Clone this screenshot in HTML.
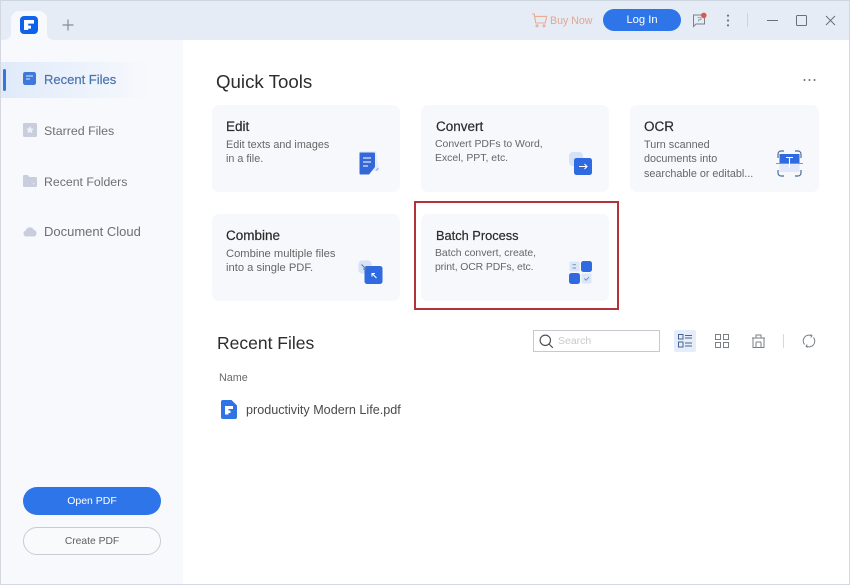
<!DOCTYPE html>
<html lang="en">
<head>
<meta charset="utf-8">
<title>Quick Tools</title>
<style>
html,body{margin:0;padding:0;width:850px;height:585px;overflow:hidden;background:#fff;font-family:"Liberation Sans",sans-serif;}
.a{position:absolute;white-space:nowrap;}
#app{position:relative;width:850px;height:585px;overflow:hidden;background:#fff;}
.card{position:absolute;background:#f6f8fc;border-radius:7px;width:188px;height:87px;}
.t{position:absolute;left:14px;top:13px;font-size:13.5px;line-height:17px;color:#2b2b2b;white-space:nowrap;-webkit-text-stroke:.2px #2b2b2b;}
.d{position:absolute;left:14px;top:32.5px;font-size:10.8px;line-height:14.5px;color:#666;white-space:nowrap;}
.nav{font-size:13px;color:#6f6f6f;line-height:18px;}
svg{position:absolute;display:block;}
</style>
</head>
<body>
<div id="app">
  <!-- sidebar -->
  <div class="a" style="left:0;top:40px;width:183px;height:545px;background:#f7f9fd;"></div>
  <div class="a" style="left:0;top:62px;width:150px;height:36px;background:linear-gradient(90deg,#dfeafa 0%,#eaf1fb 45%,#f7f9fd 100%);"></div>
  <div class="a" style="left:3px;top:69px;width:3px;height:22px;background:#3b74d9;border-radius:2px;"></div>

  <!-- title bar -->
  <div class="a" style="left:0;top:0;width:850px;height:40px;background:#e6ecf5;"></div>
  <div class="a" style="left:0;top:0;width:850px;height:1px;background:#cdd5e0;"></div>
  <svg style="left:3px;top:11px" width="52" height="29" viewBox="0 0 52 29">
    <path d="M0 29c5 0 8-2 8-7V8a8 8 0 0 1 8-8h20a8 8 0 0 1 8 8v14c0 5 3 7 8 7z" fill="#f7f9fd"/>
  </svg>

  <svg style="left:20px;top:16px" width="18" height="18" viewBox="0 0 18 18">
    <rect width="18" height="18" rx="4" fill="#0f62ea"/>
    <path d="M4 4h10v3.6H8.2v2H11v3H8.2V14H4z" fill="#fff"/>
  </svg>
  <svg style="left:62px;top:19px" width="12" height="12" viewBox="0 0 12 12">
    <path d="M6 .5v11M.5 6h11" stroke="#858b94" stroke-width="1.2" fill="none"/>
  </svg>

  <svg style="left:531px;top:13px" width="17" height="15" viewBox="0 0 17 15" fill="none" stroke="#e8ab94" stroke-width="1.1">
    <path d="M1 1h2.200l1.600 9h9.400l1.500-6.600H3.800"/><circle cx="6" cy="12.800" r="1"/><circle cx="13" cy="12.800" r="1"/>
  </svg>
  <div class="a" style="left:550px;top:13.500px;font-size:10.600px;line-height:15px;color:#e3a690;">Buy Now</div>
  <div class="a" style="left:603px;top:9px;width:78px;height:22px;border-radius:11px;background:#2d75e8;color:#fff;font-size:11.200px;line-height:23px;text-align:center;">Log In</div>

  <svg style="left:692px;top:12px" width="16" height="16" viewBox="0 0 16 16" fill="none">
    <path d="M1.500 3h11v9H4l-2.500 2.500z" stroke="#7a818b" stroke-width="1"/>
    <path d="M5.600 5.600h2.400a1 1 0 0 1 0 2.200H6.600v1.600" stroke="#8a9099" stroke-width=".8"/>
    <circle cx="11.800" cy="3.400" r="2.800" fill="#dd5a46"/>
  </svg>
  <svg style="left:726px;top:14px" width="4" height="13" viewBox="0 0 4 13" fill="#6d747e">
    <circle cx="2" cy="1.600" r="1.100"/><circle cx="2" cy="6.500" r="1.100"/><circle cx="2" cy="11.400" r="1.100"/>
  </svg>
  <div class="a" style="left:747px;top:13px;width:1px;height:14px;background:#cfd5dd;"></div>
  <div class="a" style="left:767px;top:20px;width:11px;height:1px;background:#6a7079;"></div>
  <div class="a" style="left:796px;top:15px;width:9px;height:9px;border:1px solid #6a7079;border-radius:1.500px;"></div>
  <svg style="left:825px;top:15px" width="11" height="11" viewBox="0 0 11 11">
    <path d="M1 1l9 9M10 1l-9 9" stroke="#6a7079" stroke-width="1" fill="none"/>
  </svg>

  <!-- nav -->
  <svg style="left:23px;top:72px" width="13" height="13" viewBox="0 0 13 13">
    <rect width="13" height="13" rx="2.200" fill="#3f78dc"/>
    <path d="M3 4h7M3 7h4" stroke="#dce8fa" stroke-width="1"/>
  </svg>
  <div class="a nav" style="left:44px;top:71px;color:#4a74ae;-webkit-text-stroke:.2px #4a74ae;">Recent Files</div>

  <svg style="left:23px;top:123px" width="14" height="14" viewBox="0 0 14 14">
    <rect width="14" height="14" rx="1.500" fill="#c9cedc"/>
    <path d="M7 3l1.200 2.500 2.600.3-1.900 1.800.5 2.600L7 9l-2.400 1.200.5-2.600L3.200 5.800l2.600-.3z" fill="#eef0f6"/>
  </svg>
  <div class="a nav" style="left:44px;top:122px;font-size:12.400px;">Starred Files</div>

  <svg style="left:23px;top:175px" width="14" height="12" viewBox="0 0 14 12">
    <path d="M0 1.300A1.200 1.200 0 0 1 1.200 0h3.600l1.500 2h6.500A1.200 1.200 0 0 1 14 3.200v7.600a1.200 1.200 0 0 1-1.200 1.200H1.200A1.200 1.200 0 0 1 0 10.800z" fill="#c9cedc"/>
    <path d="M9.800 8.800h1.600" stroke="#eef0f6" stroke-width=".9"/>
  </svg>
  <div class="a nav" style="left:44px;top:173px;font-size:12.300px;">Recent Folders</div>

  <svg style="left:23px;top:226px" width="14" height="11" viewBox="0 0 14 11">
    <path d="M3.200 10.500A3 3 0 0 1 2.800 4.600 4.300 4.300 0 0 1 10.900 4a3.300 3.300 0 0 1-.2 6.500z" fill="#c9cedc"/>
  </svg>
  <div class="a nav" style="left:44px;top:223px;">Document Cloud</div>

  <div class="a" style="left:23px;top:487px;width:138px;height:28px;border-radius:14px;background:#2d75e8;color:#fff;font-size:10.500px;line-height:29px;text-align:center;">Open PDF</div>
  <div class="a" style="left:23px;top:527px;width:136px;height:26px;border-radius:14px;border:1px solid #c8ccd3;background:#f9fafc;color:#5e5e5e;font-size:10.300px;line-height:27px;text-align:center;">Create PDF</div>

  <!-- Quick tools -->
  <div class="a" style="left:216px;top:69.500px;font-size:18.700px;line-height:23px;color:#2c2c2c;">Quick Tools</div>
  <svg style="left:803px;top:78px" width="13" height="4" viewBox="0 0 13 4" fill="#666c75">
    <circle cx="1.500" cy="2" r="1"/><circle cx="6.500" cy="2" r="1"/><circle cx="11.500" cy="2" r="1"/>
  </svg>

  <div class="card" style="left:212px;top:105px;">
    <div class="t">Edit</div>
    <div class="d">Edit texts and images<br>in a file.</div>
  </div>
  <div class="card" style="left:421px;top:105px;">
    <div class="t" style="left:15px;">Convert</div>
    <div class="d" style="font-size:10.450px;">Convert PDFs to Word,<br>Excel, PPT, etc.</div>
  </div>
  <div class="card" style="left:630px;top:105px;width:189px;">
    <div class="t">OCR</div>
    <div class="d">Turn scanned<br>documents into<br>searchable or editabl...</div>
  </div>
  <div class="card" style="left:212px;top:214px;">
    <div class="t">Combine</div>
    <div class="d" style="font-size:11.200px;">Combine multiple files<br>into a single PDF.</div>
  </div>
  <div class="card" style="left:421px;top:214px;">
    <div class="t" style="left:15px;font-size:12.800px;">Batch Process</div>
    <div class="d" style="font-size:10.400px;">Batch convert, create,<br><span style="letter-spacing:-.1px">print, OCR PDFs, etc.</span></div>
  </div>
  <div class="a" style="left:414px;top:201px;width:201px;height:105px;border:2px solid #b4333a;"></div>

  <!-- card icons -->
  <svg style="left:356px;top:150px" width="26" height="26" viewBox="0 0 26 26">
    <path d="M4 1h16l3 20H6z" fill="#e4edfb"/>
    <path d="M3.500 2.500h14.500a1 1 0 0 1 1 1v13.500l-6 7.500H4.500a1 1 0 0 1-1-1z" fill="#3567d8"/>
    <path d="M7 8h8M7 12h8M7 16h5" stroke="#dbe6fa" stroke-width="1.300"/>
    <path d="M19.500 20l2.500-2.500 1 1-2.500 2.500z" fill="#9db9ea"/>
  </svg>
  <svg style="left:568px;top:151px" width="25" height="25" viewBox="0 0 25 25">
    <rect x="1" y="1" width="14" height="14" rx="4" fill="#d6e2f7"/>
    <rect x="6" y="7" width="18" height="17" rx="2.500" fill="#2f6ae0"/>
    <path d="M11 15.500h8M16.500 13l2.500 2.500-2.500 2.500" stroke="#fff" stroke-width="1.100" fill="none"/>
  </svg>
  <svg style="left:776px;top:150px" width="27" height="27" viewBox="0 0 27 27" fill="none">
    <path d="M2 8V4a3 3 0 0 1 3-3h3M19 1h3a3 3 0 0 1 3 3v4M25 20v3a3 3 0 0 1-3 3h-3M8 26H5a3 3 0 0 1-3-3v-3" stroke="#4d6c96" stroke-width="1.200"/>
    <rect x="3.500" y="4" width="20" height="9" fill="#2f6ae0"/>
    <rect x="3.500" y="13" width="20" height="9" fill="#dfe8f8"/>
    <path d="M0 13.500h27" stroke="#5a78a8" stroke-width=".8"/>
    <path d="M10 7.500h7M13.500 7.500v10" stroke="#fff" stroke-width="1.100"/>
  </svg>
  <svg style="left:358px;top:260px" width="25" height="25" viewBox="0 0 25 25">
    <rect x="0.500" y="0.500" width="13" height="13" rx="3.500" fill="#d6e2f7"/>
    <rect x="6.500" y="6" width="18" height="18" rx="2.500" fill="#2f6ae0"/>
    <path d="M3.500 4.500l4.500 4.500M8 6v3H5" stroke="#5478b8" stroke-width="1" fill="none"/>
    <path d="M18.500 18l-4.500-4.500M14 16.500v-3h3" stroke="#fff" stroke-width="1.100" fill="none"/>
  </svg>
  <svg style="left:569px;top:261px" width="23" height="23" viewBox="0 0 23 23">
    <rect x="0.500" y="0.500" width="10" height="10" rx="1.500" fill="#dbe6f8"/>
    <rect x="12" y="0" width="11" height="11" rx="2.500" fill="#2f6ae0"/>
    <rect x="0" y="12" width="11" height="11" rx="2.500" fill="#2f6ae0"/>
    <rect x="12.500" y="12.500" width="10" height="10" rx="1.500" fill="#dbe6f8"/>
    <path d="M3.500 3.700h3.500M3.500 7h3.500" stroke="#6d8fc8" stroke-width=".9"/>
    <path d="M15.300 17.500l1.700 1.700 3-3" stroke="#6d8fc8" stroke-width="1" fill="none"/>
  </svg>

  <!-- Recent files -->
  <div class="a" style="left:217px;top:331.500px;font-size:17.500px;line-height:23px;color:#2c2c2c;">Recent Files</div>

  <div class="a" style="left:533px;top:330px;width:125px;height:20px;border:1px solid #c6c9cf;background:#fff;"></div>
  <svg style="left:539px;top:334px" width="15" height="15" viewBox="0 0 15 15" fill="none" stroke="#4f5358" stroke-width="1.200">
    <circle cx="6.300" cy="6.300" r="5.200"/><path d="M10 10l3.800 3.800"/>
  </svg>
  <div class="a" style="left:558px;top:335px;font-size:10.500px;line-height:13px;color:#c6c9ce;">Search</div>

  <div class="a" style="left:674px;top:330px;width:22px;height:22px;background:#e4edf9;border-radius:2px;"></div>
  <svg style="left:678px;top:334px" width="14" height="14" viewBox="0 0 14 14" fill="none" stroke="#46648f" stroke-width="1">
    <rect x="0.500" y="0.500" width="4.500" height="4.500"/><rect x="0.500" y="8" width="4.500" height="5"/>
    <path d="M7 1.500h7M7 4h7M7 9h7M7 12h7"/>
  </svg>
  <svg style="left:715px;top:334px" width="14" height="14" viewBox="0 0 14 14" fill="none" stroke="#7b8087" stroke-width="1">
    <rect x="0.500" y="0.500" width="5" height="5"/><rect x="8.500" y="0.500" width="5" height="5"/>
    <rect x="0.500" y="8.500" width="5" height="5"/><rect x="8.500" y="8.500" width="5" height="5"/>
  </svg>
  <svg style="left:751px;top:334px" width="15" height="14" viewBox="0 0 15 14" fill="none" stroke="#7b8087" stroke-width="1">
    <path d="M1 4h13M5 4V1h5v3M2 4v9.500h11V4M5 8v5.500M10 8v5.500M5 8h5"/>
  </svg>
  <div class="a" style="left:783px;top:334px;width:1px;height:14px;background:#d5d8dd;"></div>
  <svg style="left:802px;top:334px" width="14" height="14" viewBox="0 0 14 14" fill="none" stroke="#7b8087" stroke-width="1">
    <path d="M2.500 10.500A5.700 5.700 0 0 1 9.500 1.800M11.500 3.500A5.700 5.700 0 0 1 4.500 12.200"/>
    <path d="M8.500.5l1.500 1.300-1.300 1.600M5.500 13.500L4 12.200l1.300-1.600"/>
  </svg>

  <div class="a" style="left:219px;top:371px;font-size:10.800px;line-height:14px;color:#6a6a6a;">Name</div>
  <svg style="left:221px;top:400px" width="16" height="19" viewBox="0 0 16 19">
    <path d="M2 0h8.500L16 5.500V17a2 2 0 0 1-2 2H2a2 2 0 0 1-2-2V2a2 2 0 0 1 2-2z" fill="#2f74e4"/>
    <path d="M4 6h8v3H7.500v1.500H9.500v2.500H7.500v1.500H4z" fill="#fff"/>
  </svg>
  <div class="a" style="left:246px;top:402px;font-size:12.600px;line-height:16px;color:#4a4a4a;">productivity Modern Life.pdf</div>

  <!-- window edges -->
  <div class="a" style="left:0;top:0;width:1px;height:585px;background:#d3d8e0;"></div>
  <div class="a" style="left:849px;top:0;width:1px;height:585px;background:#d3d8e0;"></div>
  <div class="a" style="left:0;top:584px;width:850px;height:1px;background:#d3d8e0;"></div>
</div>
</body>
</html>
